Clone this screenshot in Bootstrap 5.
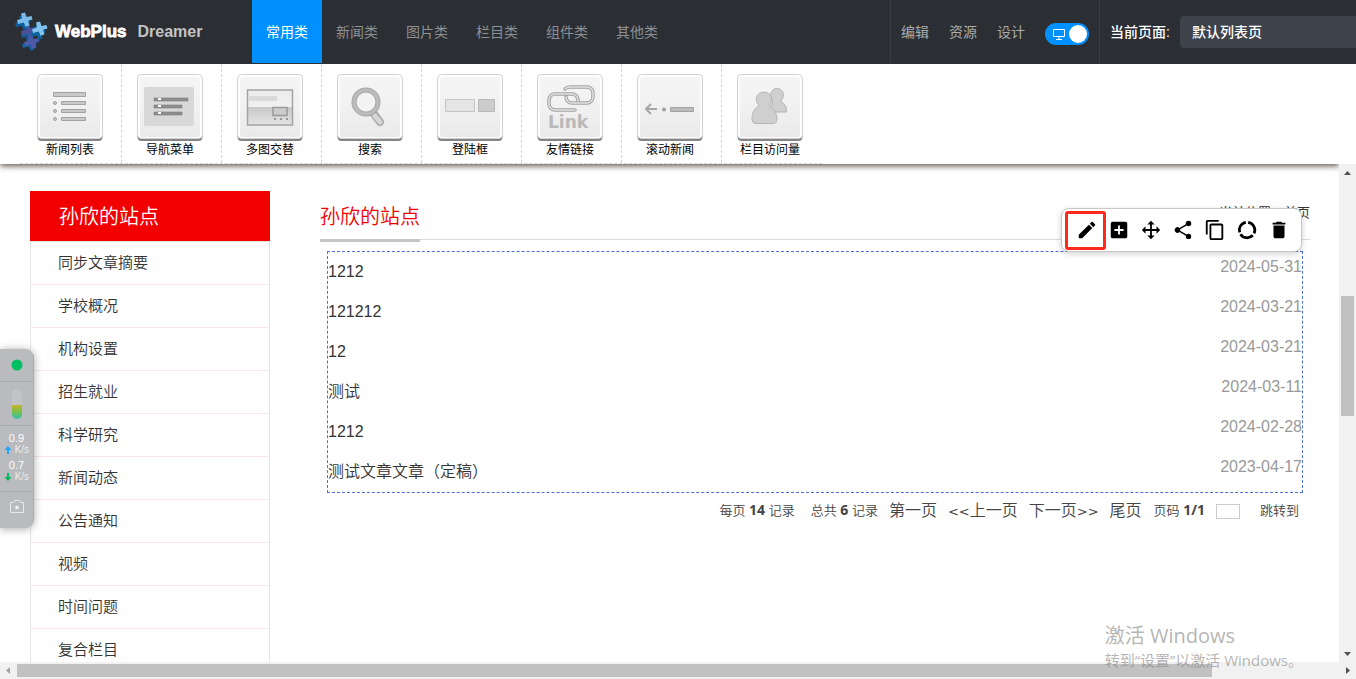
<!DOCTYPE html>
<html lang="zh-CN">
<head>
<meta charset="utf-8">
<meta name="viewport" content="width=device-width, initial-scale=1">
<title>WebPlus Dreamer</title>
<link href="https://cdn.jsdelivr.net/npm/bootstrap@5.3.0/dist/css/bootstrap.min.css" rel="stylesheet">
<style>
body{font-family:"Liberation Sans","Noto Sans CJK SC",sans-serif;font-size:14px;color:#333;background:#fff}
a{color:inherit;text-decoration:none}
.topbar{height:64px;background:#2b2e33;line-height:20px}
.brand-area{width:252px;padding-left:13px;gap:6px;font-size:17px;font-weight:700;color:#fff}
.brand-area .wp{-webkit-text-stroke:.8px #fff}
.brand-area .dr{font-size:16px;color:#c4c4c4;padding-left:5px}
.cat{width:70px;height:63px;color:#8e9093}
.cat.active{background:#0091ff;color:#fff}
.tools{border-left:1px solid #3a3d43;color:#a9abad;padding:0 10px;gap:20px;height:63px}
.view-toggle{width:44px;height:22px;appearance:none;background:#0091ff;border-radius:11px;margin:0;display:block}
.view-toggle::after{content:"";display:block;width:18px;height:18px;border-radius:50%;background:#fff;margin:2px 2px 2px 24px}
.view-icon{left:8px;top:6px;pointer-events:none}
.pagepick{border-left:1px solid #3a3d43;color:#fff;height:63px;padding-left:10px;font-weight:500;gap:10px}
.pagepick select{width:176px;height:32px;border:0;border-radius:4px 0 0 4px;background:#3d424b;color:#fff;padding:0 12px;appearance:none;font-weight:500}
.palette{height:100px;padding-left:20px;background:#fff;box-shadow:0 2px 6px rgba(60,40,30,.8);z-index:3;margin-right:17px;clip-path:inset(0 0 -12px 0)}
.palette-row{border-bottom:1px dashed #d4d4d4;font-size:12px;line-height:18px}
.piece{width:100px;border:0;border-right:1px dashed #d4d4d4;background:none;padding:10px 3px 0 0;color:#000;display:flex;flex-direction:column;align-items:center;justify-content:flex-start}
.piece:first-child{width:102px;padding-left:2px}
.piece:last-child{border-right-color:transparent}
.piece svg{display:block;flex:none}
.view{overflow:hidden;padding:27px 29px 0 30px;gap:50px}
.side{width:240px;flex:none}
.side-title{height:50px;background:#f20000;color:#fff;font-size:20px;font-weight:350;line-height:52px;padding-left:29px;margin:0}
.side-list{border:1px solid #e4e4e4;font-size:15px;font-weight:350;line-height:42px;margin:0}
.side-list a{display:block;border-bottom:1px solid #fae6e6;padding-left:27px}
.main-head{height:49px;border-bottom:1px solid #ddd}
.main-head h1{font-size:20px;font-weight:350;line-height:52px;color:#f20000;border-bottom:3px solid #c6c6c6;margin:0;height:51px}
.crumb{font-size:13px;line-height:44px}
.news{border:1px dashed #4a72d6;margin:11px 7px 0;font-size:16px;font-weight:350;line-height:40px;height:242px}
.news time{color:#999;line-height:30px}
.pager-row{font-size:16px;font-weight:350;line-height:22px;padding:7px 11px 0 0;color:#444}
.pager-row a{margin-left:11px}
.pager-row .sm{font-size:13px;color:#444}
.pager-row b{font:700 14px "Open Sans","Noto Sans CJK SC",sans-serif;line-height:20px}
.pager-row i{font:13px "DejaVu Sans",sans-serif}
.pager-row input{width:24px;height:15px;border:1px solid #ccc;padding:0;margin:4px 9px 0 11px}
.editbar{top:17px;right:8px;height:44px;border:1px solid #c8c8c8;border-radius:8px;background:#fff;padding:0 6px 0 9px;box-shadow:0 2px 6px rgba(0,0,0,.18)}
.editbar button{width:32px;border:0;background:none;padding:0;color:#000}
.editbar svg{display:block;margin:auto}
.picked::after{content:"";position:absolute;left:-6px;top:2px;width:41px;height:39px;border:3px solid #fb2a1d;border-radius:3px}
.vbar,.hbar{background:#f1f1f1;flex:none;z-index:1}
.vbar{width:17px}.hbar{height:17px}
.vbar i{flex:none;height:17px}.hbar i{flex:none;width:17px}
.vbar svg,.hbar svg{display:block}
.thumb{background:#c1c1c1}
.gadget{left:0;top:349px;width:34px;height:179px;background:#b9bbbf;border-radius:0 9px 9px 0;border-right:1px solid #a9abb0;box-shadow:0 1px 8px rgba(0,0,0,.35);z-index:5;color:#fff;font:11px/12px "Liberation Sans",sans-serif;text-align:center}
.gadget section{border-bottom:1px solid #a9abaf}
.gadget section:last-child{border:0}
.gadget .unit{font-size:10px;color:#ececee;line-height:11px;height:15px}
.gauge{width:10px;height:30px;border-radius:5px;background:linear-gradient(#c1c3c6 53%,#c5b52a 53%,#7cc04c 75%,#2cc4a8)}
.wmark{right:53px;bottom:8px;z-index:6;color:rgba(130,130,130,.6);font:15px/22px "Open Sans","Noto Sans CJK SC",sans-serif;font-weight:400;pointer-events:none}
.wmark strong{display:block;font-size:20px;font-weight:400;line-height:26px}
</style>
</head>
<body class="vh-100 overflow-hidden d-flex flex-column position-relative">
<header class="topbar d-flex flex-shrink-0">
  <a href="#" class="brand-area d-flex align-items-center">
    <svg width="36" height="40" viewBox="0 0 36 40">
      <defs><path id="plus" d="M-3-7.500 1-8.500 2.500-4 7.500-5 8.500-1.500 4-.2 5.500 4.500 1.500 5.800-.2 1.500-6 3-7 -.8-2-2.500z"/></defs>
      <use href="#plus" x="15" y="23" fill="#1a5a96"/><use href="#plus" x="15" y="20" fill="#4a509c"/>
      <use href="#plus" x="16" y="33" fill="#1761a2"/><use href="#plus" x="18" y="31" fill="#5058a8"/>
      <use href="#plus" x="9" y="12" fill="#0c609e"/><use href="#plus" x="11" y="9" fill="#7bbcec"/>
      <use href="#plus" x="24" y="22" fill="#0e639f"/><use href="#plus" x="26" y="18" fill="#81c3ee"/>
    </svg>
    <span class="wp">WebPlus</span><span class="dr">Dreamer</span>
  </a>
  <nav class="d-flex">
    <a href="#" class="cat active d-flex align-items-center justify-content-center">常用类</a>
    <a href="#" class="cat d-flex align-items-center justify-content-center">新闻类</a>
    <a href="#" class="cat d-flex align-items-center justify-content-center">图片类</a>
    <a href="#" class="cat d-flex align-items-center justify-content-center">栏目类</a>
    <a href="#" class="cat d-flex align-items-center justify-content-center">组件类</a>
    <a href="#" class="cat d-flex align-items-center justify-content-center">其他类</a>
  </nav>
  <div class="tools d-flex align-items-center ms-auto">
    <a href="#">编辑</a><a href="#">资源</a><a href="#">设计</a>
    <label class="position-relative mt-1"><input type="checkbox" class="view-toggle" checked aria-label="桌面视图">
      <svg class="view-icon position-absolute" width="12" height="11" viewBox="0 0 12 11" fill="none" stroke="#fff"><path d="M.5.500h11v7H.5zM6 8v2M3 10.500h6"/></svg></label>
  </div>
  <div class="pagepick d-flex align-items-center">
    <label for="pg">当前页面:</label>
    <select id="pg"><option>默认列表页</option></select>
  </div>
</header>

<svg width="0" height="0" class="position-absolute">
  <defs>
    <linearGradient id="face" x2="0" y2="1"><stop stop-color="#f5f5f5"/><stop offset=".5" stop-color="#f1f1f1"/><stop offset="1" stop-color="#e9e9e9"/></linearGradient>
    <linearGradient id="half" x2="0" y2="1"><stop stop-color="#ececec"/><stop offset=".48" stop-color="#f0f0f0"/><stop offset=".5" stop-color="#c8c8c8"/><stop offset="1" stop-color="#e4e4e4"/></linearGradient>
    <g id="tile"><rect x=".5" y="2" width="65" height="65" rx="4" fill="#858585"/><rect x=".5" y=".5" width="65" height="64" rx="4" fill="#fff" stroke="#d0d0d0"/><rect x="3" y="3" width="60" height="60" rx="2" fill="url(#face)"/></g>
  </defs>
</svg>

<div class="palette position-relative flex-shrink-0 d-flex">
  <div class="palette-row d-flex">
    <button class="piece"><svg width="66" height="67"><use href="#tile"/><g fill="#c9c9c9" stroke="#a2a2a2"><path d="M16.500 18.500h32v4h-32zM24.500 27.500h24v3h-24zM24.500 35.500h24v3h-24zM24.500 43.500h24v3h-24z"/><circle cx="18" cy="29" r="1.500"/><circle cx="18" cy="37" r="1.500"/><circle cx="18" cy="45" r="1.500"/></g></svg>新闻列表</button>
    <button class="piece"><svg width="66" height="67"><use href="#tile"/><rect x="7" y="13" width="50" height="39" rx="2" fill="#d8d8d8"/><g fill="#8e8e8e" stroke="#7d7d7d" stroke-width=".6"><path d="M17 24h34v3H17zM17 31h28v3H17zM17 38h28v3H17z"/></g><path d="M21 24h3v2h-3zM21 31h3v2h-3zM21 38h3v2h-3z" fill="#fff"/></svg>导航菜单</button>
    <button class="piece"><svg width="66" height="67"><use href="#tile"/><rect x="10.500" y="16" width="45" height="35" fill="url(#half)" stroke="#a3a3a3" stroke-width="1.500"/><path d="M12 22h28v5H12z" fill="#dadada"/><rect x="36" y="33.500" width="14" height="8" fill="#ccc" stroke="#999" stroke-width="1.500"/><path d="M37 44h2v2h-2zM43 44h2v2h-2zM49 44h2v2h-2z" fill="#999"/></svg>多图交替</button>
    <button class="piece"><svg width="66" height="67"><use href="#tile"/><path d="M37 40l6 8" stroke="#aaa" stroke-width="8" stroke-linecap="round"/><path d="M38 42l5 6" stroke="#d6d6d6" stroke-width="5" stroke-linecap="round"/><circle cx="29" cy="28" r="12" fill="#f3f3f3" stroke="#a6a6a6" stroke-width="5"/><circle cx="29" cy="28" r="12" fill="none" stroke="#bcbcbc" stroke-width="3"/></svg>搜索</button>
    <button class="piece"><svg width="66" height="67"><use href="#tile"/><path d="M8.500 25.500h29v12h-29z" fill="#e5e5e5" stroke="#c4c4c4"/><path d="M41.500 25.500h16v12h-16z" fill="#ccc" stroke="#b9b9b9"/></svg>登陆框</button>
    <button class="piece"><svg width="66" height="67"><use href="#tile"/><g fill="none" stroke-linecap="round"><g stroke="#a2a2a2" stroke-width="3.500"><path d="M28 15q2-2 5-2h17a6 6 0 0 1 6 6v4a6 6 0 0 1-6 6H35a6 6 0 0 1-6-6M41 27v-1a6 6 0 0 0-6-6H18a6 6 0 0 0-6 6v4a6 6 0 0 0 6 6h20"/></g><g stroke="#e2e2e2" stroke-width="1.500"><path d="M28 15q2-2 5-2h17a6 6 0 0 1 6 6v4a6 6 0 0 1-6 6H35a6 6 0 0 1-6-6M41 27v-1a6 6 0 0 0-6-6H18a6 6 0 0 0-6 6v4a6 6 0 0 0 6 6h20"/></g></g><text x="11" y="54" font-family="DejaVu Sans" font-size="17" font-weight="700" fill="#b8b8b8">Link</text></svg>友情链接</button>
    <button class="piece"><svg width="66" height="67"><use href="#tile"/><path d="M20 35H9m5-5-5 5 5 5" fill="none" stroke="#a6a6a6" stroke-width="2"/><circle cx="27" cy="35.500" r="2" fill="#a0a0a0"/><path d="M33.500 33.500h23v4h-23z" fill="#bbb" stroke="#a3a3a3"/></svg>滚动新闻</button>
    <button class="piece"><svg width="66" height="67"><use href="#tile"/><g fill="#cfcfcf" stroke="#b4b4b4"><path d="M34 38q-1-8 2-10c-4-5-3-13 3.500-13.500 7 0 9 7 4.500 12.500 4 3 6 7 5.500 11H34z"/><path d="M19 49.500q-4 0-4-4c0-8 3-11 7-14-5-5-3-13 5-13.500 8 .5 10 8 5 13.500 4 3 8 6 8 14q0 4-4 4z"/></g></svg>栏目访问量</button>
  </div>
</div>

<div class="d-flex flex-fill" style="min-height:0">
  <div class="view d-flex flex-fill align-items-start">
    <aside class="side">
      <h2 class="side-title">孙欣的站点</h2>
      <nav class="side-list"><a href="#">同步文章摘要</a><a href="#">学校概况</a><a href="#">机构设置</a><a href="#">招生就业</a><a href="#">科学研究</a><a href="#">新闻动态</a><a href="#">公告通知</a><a href="#">视频</a><a href="#">时间问题</a><a href="#">复合栏目</a></nav>
    </aside>
    <main class="flex-fill position-relative">
      <div class="main-head d-flex justify-content-between"><h1>孙欣的站点</h1><span class="crumb">当前位置：首页</span></div>
      <div class="news">
        <div class="d-flex justify-content-between"><a href="#">1212</a><time>2024-05-31</time></div>
        <div class="d-flex justify-content-between"><a href="#">121212</a><time>2024-03-21</time></div>
        <div class="d-flex justify-content-between"><a href="#">12</a><time>2024-03-21</time></div>
        <div class="d-flex justify-content-between"><a href="#">测试</a><time>2024-03-11</time></div>
        <div class="d-flex justify-content-between"><a href="#">1212</a><time>2024-02-28</time></div>
        <div class="d-flex justify-content-between"><a href="#">测试文章文章（定稿）</a><time>2023-04-17</time></div>
      </div>
      <div class="pager-row d-flex justify-content-end">
        <span class="sm">每页 <b>14</b> 记录</span><span class="sm ms-3">总共 <b>6</b> 记录</span>
        <a href="#">第一页</a><a href="#"><i>&lt;&lt;</i>上一页</a><a href="#">下一页<i>&gt;&gt;</i></a><a href="#">尾页</a>
        <span class="sm ms-2 ps-1">页码 <b>1/1</b></span><input type="text" aria-label="页码"><a href="#" class="sm">跳转到</a>
      </div>
      <div class="editbar position-absolute d-flex">
        <button class="picked position-relative" aria-label="编辑"><svg width="22" height="22" viewBox="0 0 24 24"><path d="M3 17.250V21h3.750L17.810 9.940l-3.750-3.750zM20.710 7.040a1 1 0 0 0 0-1.410l-2.340-2.340a1 1 0 0 0-1.410 0l-1.830 1.830 3.750 3.750z"/></svg></button>
        <button aria-label="添加"><svg width="22" height="22" viewBox="0 0 24 24"><path d="M19 3H5a2 2 0 0 0-2 2v14c0 1.100.9 2 2 2h14c1.100 0 2-.9 2-2V5a2 2 0 0 0-2-2zm-2 10h-4v4h-2v-4H7v-2h4V7h2v4h4z"/></svg></button>
        <button aria-label="移动"><svg width="22" height="22" viewBox="0 0 24 24"><path d="M11 5v6H5v2h6v6h2v-6h6v-2h-6V5z"/><path d="M12 2l4 4H8zM12 22l4-4H8zM2 12l4-4v8zM22 12l-4-4v8z"/></svg></button>
        <button aria-label="分享"><svg width="22" height="22" viewBox="0 0 24 24"><path d="M18 16.080c-.76 0-1.440.3-1.960.77L8.910 12.700c.05-.23.09-.46.09-.7s-.04-.47-.09-.7l7.050-4.110c.54.5 1.250.81 2.040.81a3 3 0 1 0-3-3c0 .24.04.47.09.7L8.040 9.810A3 3 0 1 0 8.040 14.190l7.120 4.160c-.05.21-.08.43-.08.65a2.920 2.920 0 1 0 2.920-2.920z"/></svg></button>
        <button aria-label="复制"><svg width="22" height="22" viewBox="0 0 24 24"><path d="M16 1H4c-1.100 0-2 .9-2 2v14h2V3h12zm3 4H8c-1.100 0-2 .9-2 2v14c0 1.100.9 2 2 2h11c1.100 0 2-.9 2-2V7c0-1.100-.9-2-2-2zm0 16H8V7h11z"/></svg></button>
        <button aria-label="数据"><svg width="22" height="22" viewBox="0 0 24 24" fill="none" stroke="#000" stroke-width="3"><path d="M13.300 3.600A8.500 8.500 0 0 1 19.700 15.600M18.300 17.700A8.500 8.500 0 0 1 4.900 16.600M4 14.500A8.500 8.500 0 0 1 10.700 3.600"/></svg></button>
        <button aria-label="删除"><svg width="22" height="22" viewBox="0 0 24 24"><path d="M6 19c0 1.100.9 2 2 2h8c1.100 0 2-.9 2-2V7H6zM19 4h-3.500l-1-1h-5l-1 1H5v2h14z"/></svg></button>
      </div>
    </main>
  </div>
  <div class="vbar d-flex flex-column">
    <i><svg width="17" height="17"><path d="M5 11l3.500-4 3.500 4z" fill="#505050"/></svg></i>
    <div style="flex:115"></div><div class="thumb mx-auto" style="flex:120;width:13px"></div><div style="flex:229"></div>
    <i><svg width="17" height="17"><path d="M5 7l3.500 4L12 7z" fill="#505050"/></svg></i>
  </div>
</div>
<div class="hbar d-flex">
  <i><svg width="17" height="17"><path d="M10 5L6 8.500 10 12z" fill="#a3a3a3"/></svg></i>
  <div class="thumb my-auto" style="flex:1195;height:13px"></div><div style="flex:127"></div>
  <i><svg width="17" height="17"><path d="M7 5l4 3.500L7 12z" fill="#505050"/></svg></i>
</div>

<aside class="gadget position-absolute">
  <section style="height:33px"><svg width="12" height="33"><circle cx="6" cy="16" r="5.500" fill="#00bf63"/></svg></section>
  <section class="d-flex align-items-center justify-content-center" style="height:44px"><div class="gauge"></div></section>
  <section style="height:66px;padding-top:6px"><div>0.9</div><div class="unit"><svg width="8" height="8"><path d="M4 0l3.500 4H5v4H3V4H.5z" fill="#1ba8ff"/></svg> K/s</div><div>0.7</div><div class="unit"><svg width="8" height="8"><path d="M4 8l3.500-4H5V0H3v4H.5z" fill="#00b85c"/></svg> K/s</div></section>
  <section><svg width="16" height="30" viewBox="0 0 16 30" fill="none" stroke="#e8e8ea"><path d="M1.500 10.500h3l1-2h5l1 2h3v10h-13z"/><circle cx="8" cy="15.500" r="1.500" fill="#fff"/></svg></section>
</aside>
<div class="wmark position-absolute"><strong>激活 Windows</strong>转到“设置”以激活 Windows。</div>
<script src="https://cdn.jsdelivr.net/npm/bootstrap@5.3.0/dist/js/bootstrap.bundle.min.js"></script>
</body>
</html>
